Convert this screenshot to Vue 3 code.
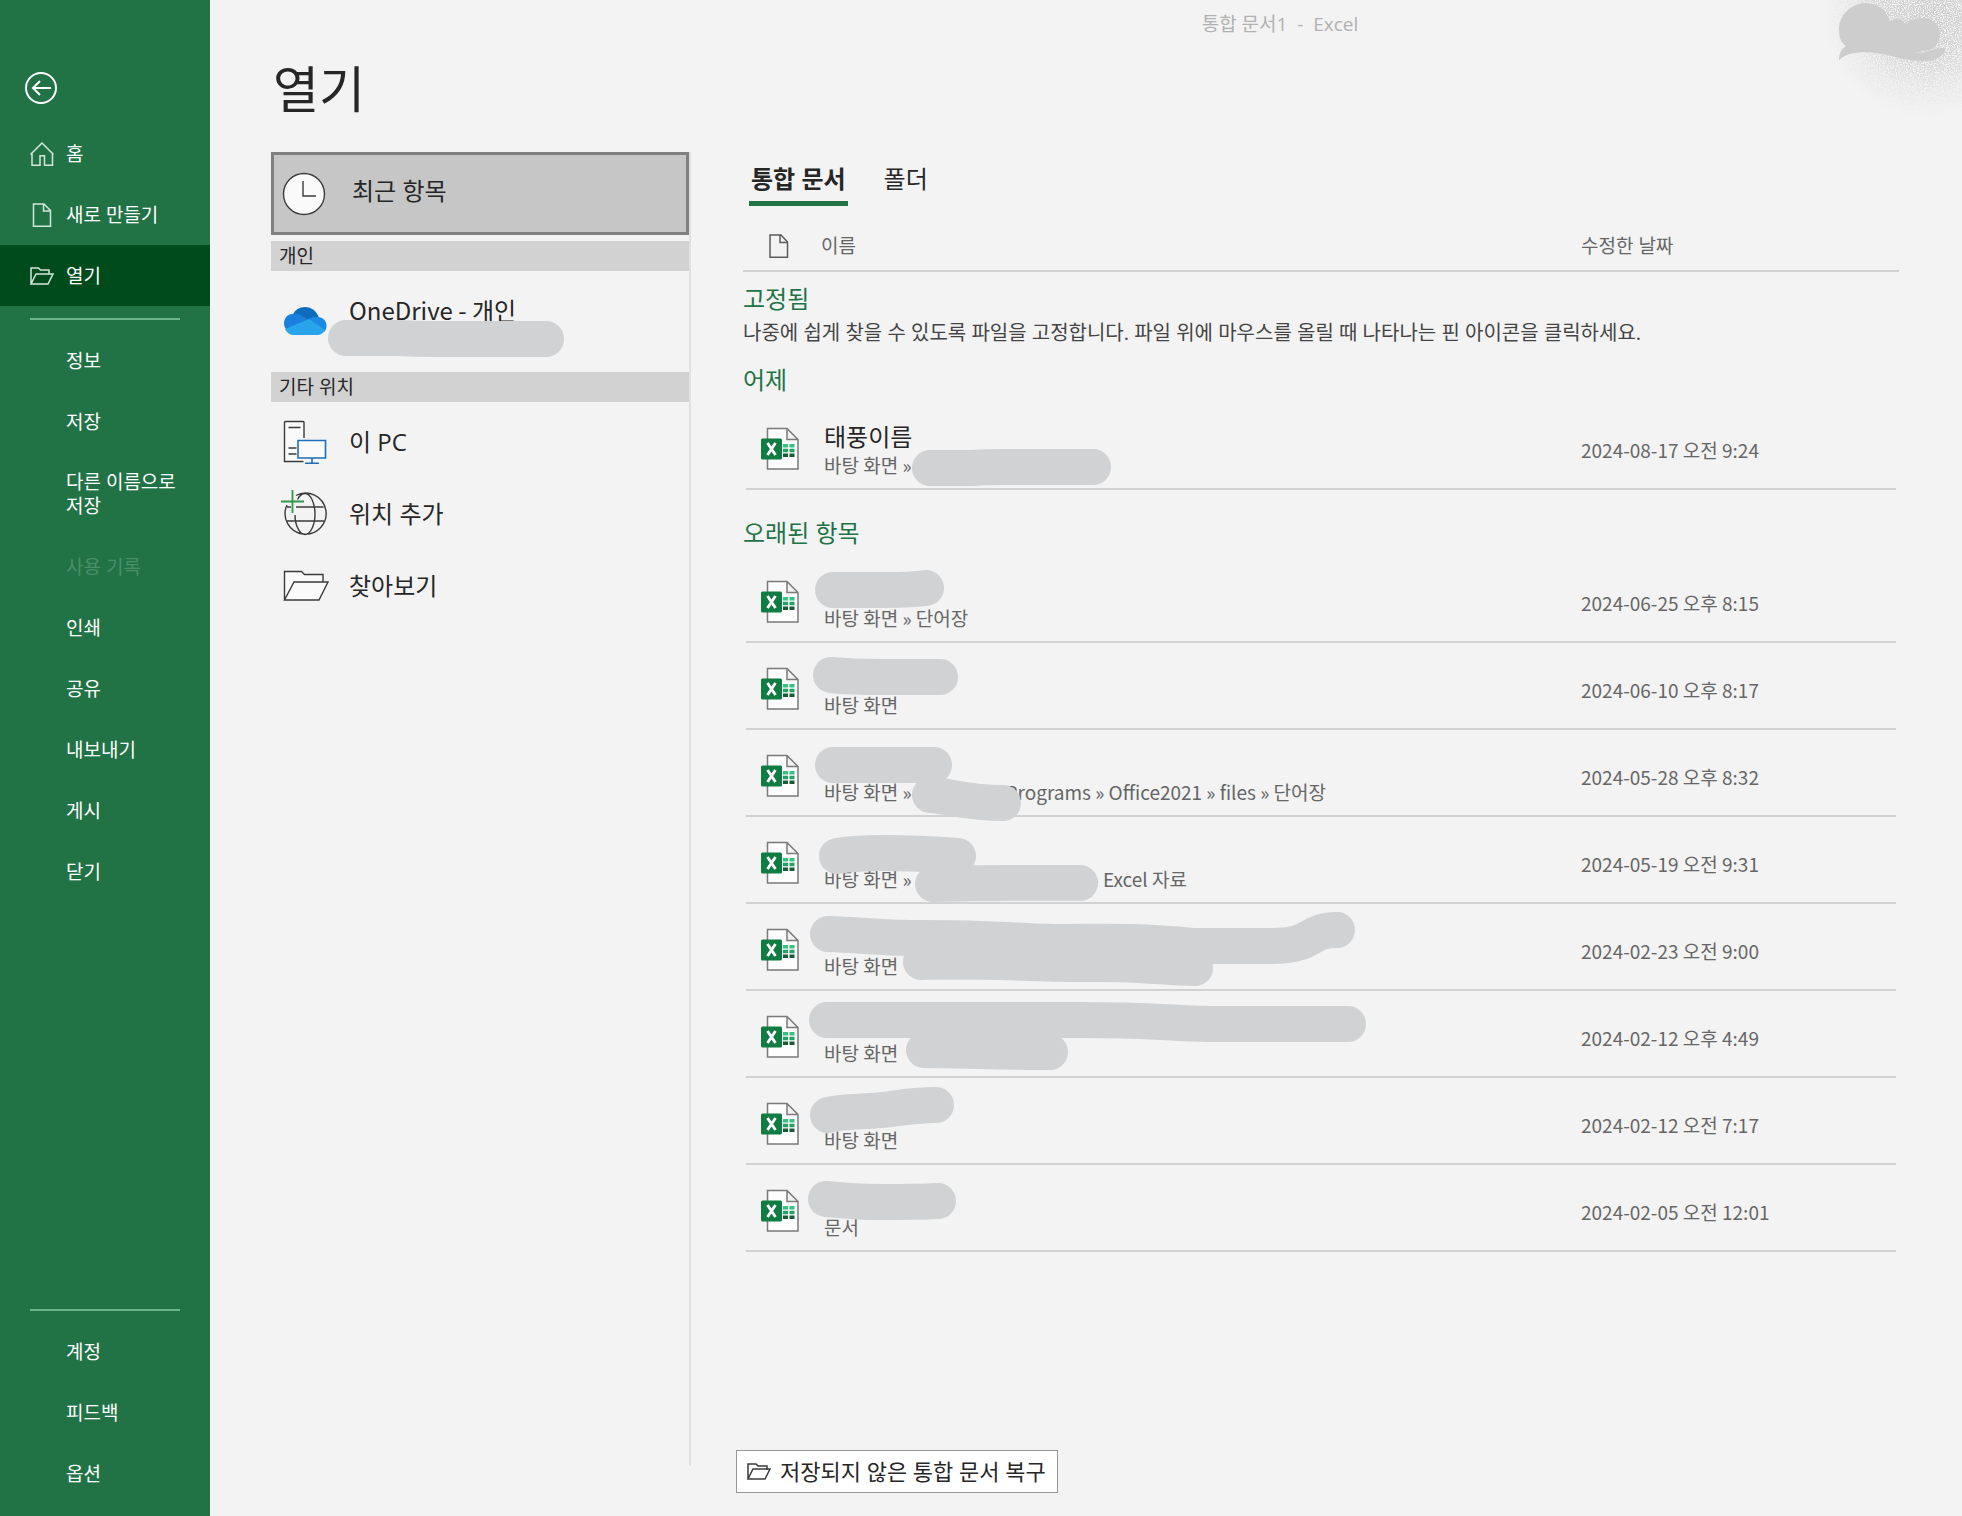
<script setup>
import { ref } from 'vue'

const topNav = [
  { label: '홈', icon: 'home' },
  { label: '새로 만들기', icon: 'doc' },
  { label: '열기', icon: 'folder', active: true },
]
const midNav = [
  { label: '정보' },
  { label: '저장' },
  { label: '다른 이름으로 저장' },
  { label: '사용 기록', disabled: true },
  { label: '인쇄' },
  { label: '공유' },
  { label: '내보내기' },
  { label: '게시' },
  { label: '닫기' },
]
const bottomNav = ['계정', '피드백', '옵션']

const tab = ref('books')

const groups = [
  {
    title: '어제',
    files: [
      { name: '태풍이름', path: '바탕 화면 »', date: '2024-08-17 오전 9:24', marks: ['M109 65H150Q165 64 180 64H272'] },
    ],
  },
  {
    title: '오래된 항목',
    files: [
      { path: '바탕 화면 » 단어장', date: '2024-06-25 오후 8:15', marks: ['M12 34H65Q90 34 105 32'] },
      { path: '바탕 화면', date: '2024-06-10 오후 8:17', marks: ['M10 32Q30 34 60 34H119'] },
      { path: '바탕 화면 »', gap: 94, rest: 'Programs » Office2021 » files » 단어장', date: '2024-05-28 오후 8:32', marks: ['M12 35H113', 'M109 65C130 66 145 73 182 73'] },
      { path: '바탕 화면 »', gap: 178, rest: '» Excel 자료', date: '2024-05-19 오전 9:31', marks: ['M16 39Q35 36 60 36Q100 36 137 39', 'M112 67Q150 66 190 66H259'] },
      { path: '바탕 화면', date: '2024-02-23 오전 9:00', marks: ['M7 30C40 31 60 34 90 34C160 33 200 38 240 38S310 36 372 42H450C495 42 485 26 516 26', 'M100 58C170 56 230 61 280 60C320 60 350 64 374 64'] },
      { path: '바탕 화면', date: '2024-02-12 오후 4:49', marks: ['M6 29H260C330 29 360 33 400 33H527', 'M103 59Q200 61 229 61'] },
      { path: '바탕 화면', date: '2024-02-12 오전 7:17', marks: ['M7 37C20 33 50 34 70 31S100 27 115 27'] },
      { path: '문서', date: '2024-02-05 오전 12:01', marks: ['M5 34Q35 37 60 37Q95 37 117 36'] },
    ],
  },
]
</script>

<template>
  <div class="app">
    <nav class="side" aria-label="파일">
      <button class="back" type="button" aria-label="뒤로">
        <svg width="34" height="34" viewBox="0 0 34 34" fill="none" stroke="#fff" stroke-width="2">
          <circle cx="17" cy="17" r="15" />
          <path d="M9 17h18M16 10l-7 7 7 7" />
        </svg>
      </button>
      <button v-for="n in topNav" :key="n.label" type="button" class="nav" :class="{ active: n.active }">
        <svg class="nav-icon" width="24" height="24" viewBox="0 0 24 24" fill="none" stroke="#d3e6da" stroke-width="1.5">
          <path v-if="n.icon === 'home'" d="M.5 12.500 12 1l11.500 11.500M2 11v12.200h8v-9.500h4.500v9.500h8V11" />
          <path v-else-if="n.icon === 'doc'" d="M3.500 1h10.500l6.500 6.500v15.700h-17zM13.500 1v7h7" />
          <path v-else d="M1 20V4h7.500l2 2h8.500v4M1 20l5-10h17l-5 10z" />
        </svg>
        <span>{{ n.label }}</span>
      </button>
      <div class="rule"></div>
      <button v-for="n in midNav" :key="n.label" type="button" class="nav" :disabled="n.disabled">
        <span>{{ n.label }}</span>
      </button>
      <div class="rule push"></div>
      <button v-for="n in bottomNav" :key="n" type="button" class="nav"><span>{{ n }}</span></button>
    </nav>

    <main class="main">
      <header class="titlebar">통합 문서1 &nbsp;-&nbsp; Excel</header>
      <svg class="account" width="180" height="120" viewBox="0 0 180 120" aria-hidden="true">
        <defs>
          <radialGradient id="spray" gradientUnits="userSpaceOnUse" cx="145" cy="14" r="104">
            <stop offset="0" stop-color="#fff" />
            <stop offset=".45" stop-color="#fff" stop-opacity=".75" />
            <stop offset=".75" stop-color="#fff" stop-opacity=".25" />
            <stop offset="1" stop-color="#fff" stop-opacity="0" />
          </radialGradient>
          <mask id="fade"><rect width="180" height="120" fill="url(#spray)" /></mask>
          <filter id="grain" x="0" y="0" width="1" height="1" color-interpolation-filters="sRGB">
            <feTurbulence type="fractalNoise" baseFrequency=".9" numOctaves="2" seed="4" />
            <feColorMatrix values="0 0 0 0 .8  0 0 0 0 .8  0 0 0 0 .8  5 0 0 0 -1.8" />
          </filter>
        </defs>
        <g mask="url(#fade)"><rect width="180" height="120" filter="url(#grain)" /></g>
        <path fill="#cdcdcd" d="M57 60C57 54 59 49 64 46C58 42 57 36 57 29C57 15 70 3 84 3C97 3 105 12 108 22C112 17 120 18 124 25C127 20 133 18 142 18C153 19 158 27 158 34C158 44 151 51 141 51C137 53 133 52 131 52C142 55 150 48 162 48C165 50 160 57 154 59C143 63 124 60 109 56C91 51 67 50 57 60z" />
      </svg>
      <h1>열기</h1>

      <div class="body">
        <section class="places">
          <button type="button" class="place selected">
            <svg width="44" height="44" viewBox="0 0 44 44" fill="none" stroke="#3b3b3b" stroke-width="1.4">
              <circle cx="22" cy="22" r="20.500" fill="#fafafa" />
              <path d="M21 9v15h13" />
            </svg>
            <span>최근 항목</span>
          </button>
          <h2>개인</h2>
          <button type="button" class="place drive">
            <svg width="44" height="44" viewBox="0 0 44 44">
              <path fill="#0f6cbd" d="M10 15C13 5 31 3 36 18L24 23z" />
              <path fill="#1a7fdd" d="M9 33C-2 30-1 15 9 14c5-1 8 0 12 3l9 5-10 8z" />
              <path fill="#1b8ae4" d="M23 21c4-4 8-4 12-4 10 1 10 12 6 15z" />
              <path fill="#28a4ea" d="M2 29 26 19l16 11c-2 4-5 5-8 5H11c-4 0-7-2-9-6z" />
            </svg>
            <span>OneDrive - 개인</span>
            <svg class="marks" width="10" height="10" aria-hidden="true"><path d="M75 67H125Q145 68 165 68H275" /></svg>
          </button>
          <h2 class="second">기타 위치</h2>
          <button type="button" class="place">
            <svg width="44" height="44" viewBox="0 0 44 44" fill="none" stroke="#3b3b3b" stroke-width="1.400">
              <path fill="#fafafa" stroke="none" d="M2 2h19v40H2z" />
              <path d="M21 18V2.500q0-1-1-1H2.500q-1 0-1 1V41.500h19M5.500 7.500h12M5.500 28h8M5.500 34h8" />
              <path fill="#fafafa" stroke="#1e6fb8" stroke-width="1.600" d="M15 20.500h27.500v17.500H15zM29 38v5M22 43.200h14" />
            </svg>
            <span>이 PC</span>
          </button>
          <button type="button" class="place">
            <svg class="globe" width="44" height="44" viewBox="0 0 44 44" fill="none" stroke="#3b3b3b" stroke-width="1.400">
              <path d="M13 3.500A20.500 20.500 0 1 1 4 13M22 1.500c-4 0-6 3-7.500 6M12 23C12 34 17 42.500 22 42.500S32 34 32 22 27 1.500 22 1.500M13 15h27.500M3 29h38M4 15h4" />
              <path stroke="#2f9a4b" stroke-width="1.800" d="M-2 9.500h23M9.500-2v23" />
            </svg>
            <span>위치 추가</span>
          </button>
          <button type="button" class="place">
            <svg class="globe" width="44" height="44" viewBox="0 0 44 44" fill="none" stroke="#3b3b3b" stroke-width="1.400">
              <path fill="#fafafa" d="M1.500 36V7.500h17l3 3H40V18M1.500 36 11 18h34l-9 18z" />
            </svg>
            <span>찾아보기</span>
          </button>
        </section>

        <section class="recent">
          <div class="tabs" role="tablist">
            <button type="button" role="tab" :aria-selected="tab === 'books'" :class="{ on: tab === 'books' }" @click="tab = 'books'">통합 문서</button>
            <button type="button" role="tab" :aria-selected="tab === 'folders'" :class="{ on: tab === 'folders' }" @click="tab = 'folders'">폴더</button>
          </div>

          <table>
            <colgroup><col class="c-icon" /><col /><col class="c-date" /></colgroup>
            <thead>
              <tr>
                <th aria-label="형식">
                  <svg class="doc" width="20" height="24" viewBox="0 0 20 24" fill="none" stroke="#5c5c5c" stroke-width="1.500">
                    <path d="M1 1h11l6.500 7v15.200H1zM11 1v7.500h7.500" />
                  </svg>
                </th>
                <th scope="col">이름</th>
                <th scope="col">수정한 날짜</th>
              </tr>
            </thead>
            <tbody>
              <tr class="group first"><th colspan="3">고정됨</th></tr>
              <tr class="hint"><td colspan="3">나중에 쉽게 찾을 수 있도록 파일을 고정합니다. 파일 위에 마우스를 올릴 때 나타나는 핀 아이콘을 클릭하세요.</td></tr>
            </tbody>
            <tbody v-for="g in groups" :key="g.title">
              <tr class="group"><th colspan="3">{{ g.title }}</th></tr>
              <tr v-for="f in g.files" :key="f.date" class="file">
                <td class="type">
                  <svg width="40" height="44" viewBox="0 0 40 44">
                    <path fill="#fdfdfd" stroke="#7a7a7a" stroke-width="1.500" d="M7.500 1.500H27L38 12.500V42H7.500zM27 1.500v11h11" />
                    <path fill="#33c481" d="M23 17h5v3.500h-5zM29.500 17h5v3.500h-5z" />
                    <path fill="#21a366" d="M23 21.800h5v3.500h-5zM29.500 21.800h5v3.500h-5z" />
                    <path fill="#185c37" d="M23 26.500h5V30h-5zM29.500 26.500h5V30h-5z" />
                    <rect x="1" y="11.500" width="21" height="21" rx="1.500" fill="#107c41" />
                    <path stroke="#fff" stroke-width="2.800" d="m7.500 16 8 12M15.500 16l-8 12" />
                  </svg>
                </td>
                <td>
                  <div class="entry">
                    <span class="name">{{ f.name }}</span>
                    <span class="path">{{ f.path }}<i v-if="f.gap" :style="{ width: f.gap + 'px' }"></i>{{ f.rest }}</span>
                    <svg class="marks" width="10" height="10" aria-hidden="true"><path v-for="m in f.marks" :key="m" :d="m" /></svg>
                  </div>
                </td>
                <td class="date">{{ f.date }}</td>
              </tr>
            </tbody>
          </table>

          <button type="button" class="recover">
            <svg width="24" height="20" viewBox="0 0 24 20" fill="none" stroke="#3b3b3b" stroke-width="1.500">
              <path d="M1 17V2h8l2 2h9v4M1 17l5-10h17l-5 10z" />
            </svg>
            <span>저장되지 않은 통합 문서 복구</span>
          </button>
        </section>
      </div>
    </main>
  </div>
</template>

<style>
body {
  margin: 0;
}
</style>

<style scoped>
.app {
  display: flex;
  min-height: 100vh;
  background: #f3f3f3;
  color: #262626;
  font-family: "Open Sans", "Noto Sans CJK KR", sans-serif;
  font-size: 19px;
  line-height: 24px;
}
button {
  margin: 0;
  padding: 0;
  border: 0;
  background: none;
  color: inherit;
  font: inherit;
  text-align: left;
}
svg {
  display: block;
  flex: none;
  overflow: visible;
}
.side {
  display: flex;
  flex-direction: column;
  flex: none;
  width: 210px;
  box-sizing: border-box;
  padding: 71px 0 12px;
  background: #217346;
  color: #fff;
}
.back {
  width: 34px;
  margin: 0 0 18px 24px;
}
.nav {
  display: flex;
  align-items: center;
  flex: none;
  min-height: 61px;
  box-sizing: border-box;
  padding: 18px 24px 18px 30px;
  word-break: keep-all;
}
.nav span {
  margin-left: 36px;
}
.nav-icon + span {
  margin-left: 12px;
}
.nav.active {
  background: #004b1c;
}
.nav:disabled {
  color: #4b8f68;
}
.rule {
  flex: none;
  height: 2px;
  margin: 12px 30px 10px;
  background: #6fb58c;
}
.push {
  margin-top: auto;
}
.main {
  position: relative;
  display: flex;
  flex-direction: column;
  flex: 1;
  min-width: 0;
}
.titlebar {
  padding: 12px 0 0 388px;
  text-align: center;
  color: #b1b1b1;
}
.account {
  position: absolute;
  top: 0;
  right: 0;
  overflow: hidden;
}
h1 {
  margin: 18px 0 28px 63px;
  font-size: 50px;
  line-height: 70px;
  font-weight: 400;
}
.body {
  display: flex;
  flex: 1;
}
.places {
  display: flex;
  flex-direction: column;
  flex: none;
  width: 418px;
  margin: 0 0 50px 61px;
  border-right: 2px solid #e1e1e1;
}
.place {
  position: relative;
  display: flex;
  align-items: center;
  gap: 22px;
  height: 72px;
  padding-left: 12px;
  font-size: 24px;
  line-height: 32px;
}
.place.selected {
  height: 83px;
  box-sizing: border-box;
  gap: 26px;
  padding-left: 8px;
  border: 3px solid #808080;
  background: #c6c6c6;
}
.selected span {
  padding-bottom: 6px;
}
.place.drive {
  height: 101px;
}
.drive span {
  padding-bottom: 24px;
  font-family: "Noto Sans CJK KR", sans-serif;
}
h2 {
  margin: 6px 0 0;
  padding-left: 8px;
  background: #d2d2d2;
  font-size: 19px;
  line-height: 30px;
  font-weight: 400;
}
h2.second {
  margin: 0 0 4px;
}
.recent {
  display: flex;
  flex-direction: column;
  align-items: flex-start;
  flex: 1;
  min-width: 0;
  padding: 0 63px 23px 45px;
}
.tabs {
  display: flex;
  gap: 34px;
  margin: 11px 0 0 13px;
}
.tabs button {
  padding: 0 2px 6px;
  border-bottom: 5px solid transparent;
  font-size: 24px;
  line-height: 32px;
}
.tabs .on {
  border-color: #217346;
  font-weight: 700;
}
table {
  width: calc(100% - 7px);
  margin: 16px 0 0 7px;
  border-collapse: collapse;
  table-layout: fixed;
  color: #666;
}
th,
td {
  padding: 0;
  text-align: left;
  font-weight: 400;
}
.c-icon {
  width: 78px;
}
.c-date {
  width: 318px;
}
thead th {
  height: 48px;
  border-bottom: 2px solid #d2d2d2;
}
.doc {
  margin-left: 26px;
}
.group th {
  height: 56px;
  padding-top: 10px;
  box-sizing: border-box;
  color: #217346;
  font-size: 24px;
  line-height: 32px;
}
tbody + tbody + tbody .group th {
  height: 66px;
  padding-top: 20px;
}
.group.first th {
  height: 48px;
  padding-top: 6px;
}
.hint td {
  height: 28px;
  color: #444;
  font-size: 20px;
  line-height: 28px;
}
.file {
  background: linear-gradient(#d2d2d2, #d2d2d2) center bottom / calc(100% - 6px) 2px no-repeat;
}
.file td {
  height: 87px;
  box-sizing: border-box;
}
.type svg {
  margin: 4px 0 0 17px;
}
.file .date {
  padding-top: 6px;
  font-family: "Noto Sans CJK KR", sans-serif;
}
.entry {
  position: relative;
  display: flex;
  flex-direction: column;
  height: 87px;
  box-sizing: border-box;
  padding: 18px 0 0 3px;
}
.name {
  height: 32px;
  color: #262626;
  font-size: 24px;
  line-height: 32px;
}
.path {
  font-family: "Noto Sans CJK KR", sans-serif;
  white-space: nowrap;
}
.path i {
  display: inline-block;
}
.marks {
  position: absolute;
  top: 0;
  left: 0;
  fill: none;
  stroke: #d0d2d4;
  stroke-width: 36px;
  stroke-linecap: round;
}
.recover {
  display: flex;
  align-items: center;
  gap: 9px;
  margin-top: auto;
  padding: 5px 11px 5px 10px;
  border: 1px solid #969696;
  background: #fff;
  font-size: 22px;
  line-height: 31px;
}
</style>
